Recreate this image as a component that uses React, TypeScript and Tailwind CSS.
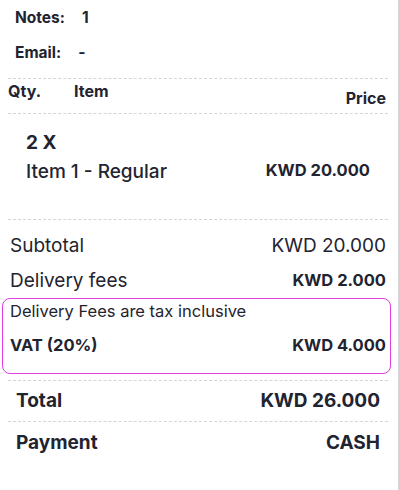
export default function App() {
  return (
    <div
      className="w-[400px] h-[490px] bg-white text-[#1f2430] border-r-2 border-[#d4d4d8] overflow-hidden"
      style={{ fontFamily: "Inter, 'Noto Sans', sans-serif" }}
    >
      <div className="pl-[15px] pt-[8px] flex flex-col gap-[15px] text-[15.5px] leading-[20px] font-bold">
        <div className="flex gap-[17px]">
          <span>Notes:</span>
          <span>1</span>
        </div>
        <div className="flex gap-[17px]">
          <span>Email:</span>
          <span>-</span>
        </div>
      </div>

      <div className="ml-[8px] mr-[10px] mt-[15px] border-t border-dashed border-gray-300" />
      <div className="flex justify-between pl-[8px] pr-[12px] h-[34px] text-[16px] leading-[20px] font-bold">
        <div className="flex gap-[33px] pt-[2px]">
          <span>Qty.</span>
          <span>Item</span>
        </div>
        <span className="pt-[9px]">Price</span>
      </div>
      <div className="ml-[8px] mr-[10px] border-t border-dashed border-gray-300" />

      <div className="flex justify-between items-end pl-[26px] pr-[28px] pt-[17px] pb-[35px]">
        <div className="flex flex-col gap-[5px] text-[19px] leading-[24px]">
          <span className="font-bold">2 X</span>
          <span className="font-medium">Item 1 - Regular</span>
        </div>
        <span className="text-[16.5px] leading-[22px] font-bold pb-[3px]">KWD 20.000</span>
      </div>
      <div className="ml-[8px] mr-[10px] border-t border-dashed border-gray-300" />

      <div className="pl-[10px] pr-[12px] pt-[14px] flex flex-col gap-[11px]">
        <div className="flex justify-between text-[19px] leading-[24px]">
          <span>Subtotal</span>
          <span>KWD 20.000</span>
        </div>
        <div className="flex justify-between items-start">
          <span className="text-[19px] leading-[24px]">Delivery fees</span>
          <span className="text-[16.5px] leading-[22px] font-bold">KWD 2.000</span>
        </div>
      </div>

      <div className="ml-[2px] mr-[7px] mt-[5px] h-[76px] border-[1.5px] border-[#e23de2] rounded-[8px] pl-[7px] pr-[4px] pt-[1px] flex flex-col gap-[12px] text-[16.5px] leading-[22px]">
        <span>Delivery Fees are tax inclusive</span>
        <div className="flex justify-between font-bold">
          <span>VAT (20%)</span>
          <span>KWD 4.000</span>
        </div>
      </div>

      <div className="ml-[8px] mr-[10px] mt-[6px] border-t border-dashed border-gray-300" />
      <div className="flex justify-between pl-[16px] pr-[18px] h-[40px] items-center text-[19px] font-bold">
        <span>Total</span>
        <span>KWD 26.000</span>
      </div>
      <div className="ml-[8px] mr-[10px] border-t border-dashed border-gray-300" />
      <div className="flex justify-between pl-[16px] pr-[18px] h-[42px] items-center text-[19px] font-bold">
        <span>Payment</span>
        <span>CASH</span>
      </div>
    </div>
  );
}
